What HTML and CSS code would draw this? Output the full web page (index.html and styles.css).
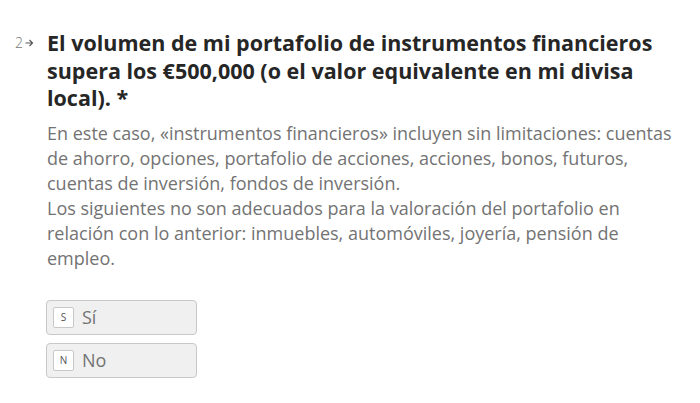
FILE: index.html
```html
<!DOCTYPE html>
<html lang="es">
<head>
<meta charset="utf-8">
<link rel="stylesheet" href="styles.css">
</head>
<body>
<div class="question">
  <div class="gutter"><span class="num">2</span><svg class="arrow" width="9" height="8" viewBox="0 0 9 8"><path d="M0.5 4H7.5M4.5 1L7.5 4L4.5 7" fill="none" stroke="#555" stroke-width="1.2"/></svg></div>
  <div class="content">
    <h1 class="title">El volumen de mi portafolio de instrumentos financieros supera los €500,000 (o el valor equivalente en mi divisa local). *</h1>
    <p class="desc">En este caso, «instrumentos financieros» incluyen sin limitaciones: cuentas de ahorro, opciones, portafolio de acciones, acciones, bonos, futuros, cuentas de inversión, fondos de inversión.<br>Los siguientes no son adecuados para la valoración del portafolio en relación con lo anterior: inmuebles, automóviles, joyería, pensión de empleo.</p>
    <div class="choices">
      <div class="choice"><span class="key">S</span><span class="label">Sí</span></div>
      <div class="choice"><span class="key">N</span><span class="label">No</span></div>
    </div>
  </div>
</div>
</body>
</html>
```
FILE: styles.css
```css
html, body { margin: 0; padding: 0; background: #fff; }
body { font-family: "Open Sans", "Liberation Sans", sans-serif; }
.question { display: flex; padding-top: 29px; }
.gutter { width: 47px; flex: none; display: flex; justify-content: flex-end; align-items: center; gap: 2px; height: 28px; padding-right: 13px; box-sizing: border-box; color: #777; font-size: 14px; }
.num { line-height: 1; font-weight: 300; }
.arrow { display: block; }
.content { flex: 1; padding-right: 28px; }
.title { margin: 0; font-size: 21.5px; line-height: 27.5px; font-weight: 700; color: #262626; }
.desc { margin: 9px 0 0; font-size: 18px; line-height: 25px; color: #737373; }
.choices { display: flex; flex-direction: column; gap: 8px; margin-top: 29px; margin-left: -1px; }
.choice { width: 151px; height: 35px; box-sizing: border-box; border: 1px solid #c8c8c8; border-radius: 4px; background: #f0f0f0; display: flex; align-items: center; padding-left: 6px; }
.key { width: 21px; height: 21px; box-sizing: border-box; border: 1px solid #c8c8c8; background: #fff; border-radius: 2px; display: flex; align-items: center; justify-content: center; font-size: 10px; color: #555; }
.label { margin-left: 8px; font-size: 18px; color: #737373; }
```
